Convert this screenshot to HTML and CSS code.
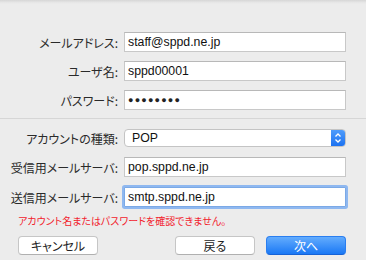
FILE: index.html
```html
<!DOCTYPE html>
<html lang="ja">
<head>
    <meta charset="UTF-8">
    <title>アカウント設定</title>
    <link rel="stylesheet" href="styles.css">
</head>
<body>
    <div class="top-edge"></div>
    <div class="sheet">
        <div class="group">
            <div class="row">
                <label class="label">メールアドレス:</label>
                <div class="field">staff@sppd.ne.jp</div>
            </div>
            <div class="row">
                <label class="label">ユーザ名:</label>
                <div class="field">sppd00001</div>
            </div>
            <div class="row">
                <label class="label">パスワード:</label>
                <div class="field dots">●●●●●●●●</div>
            </div>
        </div>
        <div class="separator"></div>
        <div class="group second">
            <div class="row">
                <label class="label">アカウントの種類:</label>
                <div class="select">
                    <span class="select-text">POP</span>
                    <span class="select-arrow">
                        <svg width="8" height="12" viewBox="0 0 8 12">
                            <path d="M1.5 4.5 L4 2 L6.5 4.5 M1.5 7.5 L4 10 L6.5 7.5" fill="none" stroke="#fff" stroke-width="1.3"/>
                        </svg>
                    </span>
                </div>
            </div>
            <div class="row">
                <label class="label">受信用メールサーバ:</label>
                <div class="field">pop.sppd.ne.jp</div>
            </div>
            <div class="row">
                <label class="label">送信用メールサーバ:</label>
                <div class="field focused">smtp.sppd.ne.jp</div>
            </div>
        </div>
        <p class="error">アカウント名またはパスワードを確認できません。</p>
        <div class="buttons">
            <button class="btn">キャンセル</button>
            <div class="spacer"></div>
            <button class="btn">戻る</button>
            <button class="btn primary">次へ</button>
        </div>
    </div>
</body>
</html>
```

FILE: styles.css
```css
body {
    margin: 0;
    width: 366px;
    height: 260px;
    overflow: hidden;
    background-color: #ececec;
    font-family: "Liberation Sans", "Noto Sans CJK JP", sans-serif;
    color: #222;
}
.top-edge {
    height: 4px;
    background: linear-gradient(#d6d6d6, #e6e6e6 60%, #ececec);
}
.sheet {
    padding-top: 28px;
}
.group {
    display: flex;
    flex-direction: column;
    gap: 9px;
    padding-right: 20px;
}
.group.second {
    gap: 10px;
}
.row {
    display: grid;
    grid-template-columns: 118px 1fr;
    column-gap: 6px;
    align-items: center;
}
.label {
    text-align: right;
    font-family: "Noto Sans CJK JP", sans-serif;
    font-feature-settings: "palt";
    font-size: 12px;
    color: #2a2a2a;
    white-space: nowrap;
}
.field {
    height: 18px;
    line-height: 18px;
    background-color: #fff;
    border: 1px solid #c8c8c8;
    border-top-color: #b8b8b8;
    padding-left: 3px;
    font-size: 12.3px;
    color: #111;
}
.field.dots {
    font-size: 9px;
    letter-spacing: 1.2px;
    color: #222;
}
.field.focused {
    border-color: #7ba9e6;
    box-shadow: 0 0 0 2px #8fb8f0;
    border-radius: 1px;
}
.separator {
    height: 1px;
    background-color: #d6d6d6;
    margin: 8px 0 10px;
}
.select {
    display: flex;
    height: 18px;
    background-color: #fff;
    border: 1px solid #c4c4c4;
    border-radius: 4px;
    overflow: hidden;
    box-sizing: border-box;
}
.select-text {
    flex: 1;
    padding-left: 7px;
    font-size: 12.3px;
    line-height: 16px;
    color: #111;
}
.select-arrow {
    width: 14px;
    display: flex;
    align-items: center;
    justify-content: center;
    background: linear-gradient(#4f9cfb, #1c72f1);
}
.error {
    margin: 7px 0 0 18px;
    font-family: "Noto Sans CJK JP", sans-serif;
    font-feature-settings: "palt";
    font-size: 10px;
    line-height: 14px;
    color: #f2222c;
}
.buttons {
    display: flex;
    gap: 11px;
    padding: 8px 20px 0 18px;
}
.spacer {
    flex: 1;
}
.btn {
    width: 80px;
    height: 19px;
    padding: 0;
    background-color: #fff;
    border: 1px solid #c6c6c6;
    border-bottom-color: #b0b0b0;
    border-radius: 4px;
    font-family: "Noto Sans CJK JP", sans-serif;
    font-feature-settings: "palt";
    font-size: 12px;
    color: #222;
}
.btn.primary {
    background: linear-gradient(#63acfd, #1a78f5);
    border-color: #2a7ef0;
    border-bottom-color: #1662d6;
    color: #fff;
}
```
